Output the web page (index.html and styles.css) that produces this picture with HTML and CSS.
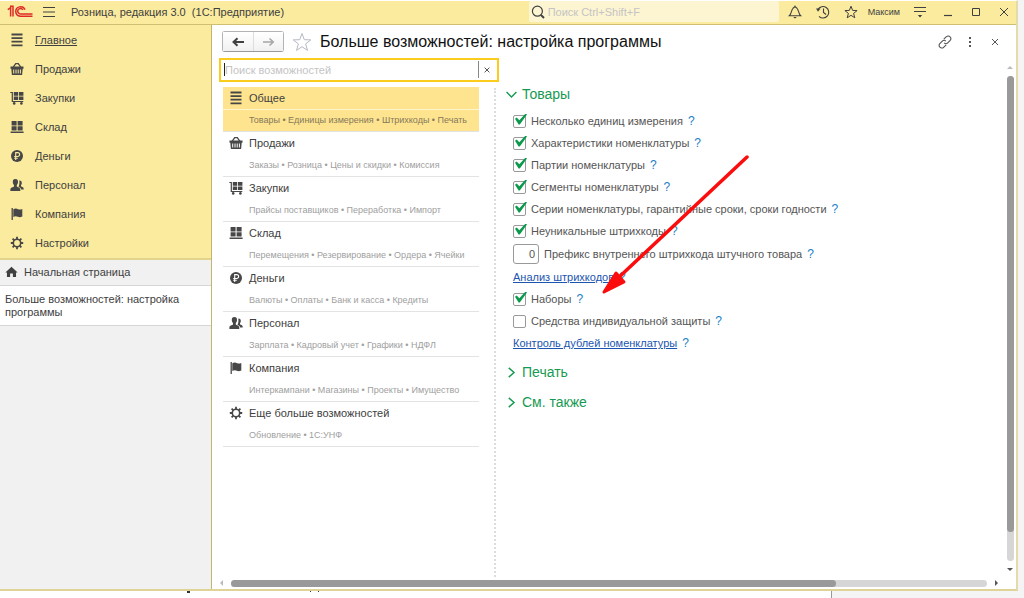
FILE: index.html
```html
<!DOCTYPE html>
<html lang="ru">
<head>
<meta charset="utf-8">
<title>Розница, редакция 3.0</title>
<link rel="stylesheet" href="styles.css">
</head>
<body>
<svg class="defs" aria-hidden="true">
  <symbol id="i-list" viewBox="0 0 14 14"><path d="M1.500 1.500h11M1.500 5.100h11M1.500 8.700h11M1.500 12.300h11" stroke="currentColor" stroke-width="1.800"/></symbol>
  <symbol id="i-basket" viewBox="0 0 14 14"><path d="M3.200 5.200 5.600 1.800M10.800 5.200 8.400 1.800M5.200 1.600h3.600" stroke="currentColor" stroke-width="1.300" fill="none"/><path fill="currentColor" fill-rule="evenodd" d="M.5 4.600h13v2.200h-.8l-.6 6.200H1.900l-.6-6.200H.5zM3.200 7.600v3.900h1V7.600zm2.300 0v3.900h1V7.600zm2.200 0v3.900h1V7.600zm2.200 0v3.900h1V7.600z"/></symbol>
  <symbol id="i-cart" viewBox="0 0 14 14"><path d="M.3 1.500h2v9h11" stroke="currentColor" stroke-width="1.200" fill="none"/><path fill="currentColor" d="M3.800 1h4.400v3.700H3.800zM9 1h4.400v3.700H9zM3.800 5.400h4.400v3.600H3.800zM9 5.400h4.400v3.600H9z"/><circle cx="4.200" cy="12.400" r="1.300" fill="currentColor"/><circle cx="11.400" cy="12.400" r="1.300" fill="currentColor"/></symbol>
  <symbol id="i-stock" viewBox="0 0 14 14"><path fill="currentColor" d="M1.600 1h5v4.400h-5zM7.600 1h5v4.400h-5zM1.600 6.300h5v4.300h-5zM7.600 6.300h5v4.300h-5zM.6 11.400h13V13H.6z"/></symbol>
  <symbol id="i-money" viewBox="0 0 14 14"><circle cx="7" cy="7" r="6" fill="currentColor"/><path class="knockout" d="M5.700 11V3.600h2a1.900 1.900 0 0 1 0 3.900H4.200M4.200 9.200h3.600" fill="none" stroke-width="1.100"/></symbol>
  <symbol id="i-staff" viewBox="0 0 14 14"><path fill="currentColor" d="M5.400 1C7.400 1 8.100 2.300 8 4c0 1.400-.6 2.400-1.200 3v1.600c.8.700 3.500 1.100 3.500 2.800V13H.4v-1.600c0-1.700 2.800-2.100 3.600-2.800V7C3.300 6.400 2.800 5.400 2.800 4c-.1-1.700.7-3 2.600-3zM9.300 2.600c1.700-.2 2.600.9 2.500 2.500 0 1-.4 1.800-.8 2.200v1c.6.600 2.700.900 2.700 2.300v1h-2.500c-.2-1.600-1.800-2.400-2.700-2.800.9-1.500 1.200-4 .8-6.200z"/></symbol>
  <symbol id="i-flag" viewBox="0 0 14 14"><path d="M2.200 1v12" stroke="currentColor" stroke-width="1.300"/><path fill="currentColor" d="M3.300 2.200c2-1 3.500-.7 4.800 0 1.400.6 2.600.4 4.200-.3v7.500c-1.600.8-3 1-4.400.4-1.400-.6-2.700-.9-4.600.1z"/></symbol>
  <symbol id="i-gear" viewBox="0 0 14 14"><circle cx="7" cy="7" r="3.700" fill="none" stroke="currentColor" stroke-width="1.600"/><path d="M7 .8v2.400M7 10.800v2.400M.8 7h2.400M10.800 7h2.400M2.600 2.600l1.700 1.700M9.700 9.700l1.700 1.700M11.400 2.600 9.700 4.300M4.300 9.700l-1.700 1.700" stroke="currentColor" stroke-width="1.800"/></symbol>
  <symbol id="i-star" viewBox="0 0 20 20"><path d="m10 1.500 2.300 6.200 6.500.2-5.200 4 1.900 6.500L10 14.700l-5.500 3.700 1.900-6.500-5.200-4 6.500-.2z" fill="none" stroke="currentColor"/></symbol>
  <symbol id="i-down" viewBox="0 0 10 10"><path d="m.5 2.800 4.500 4.400 4.500-4.400" fill="none" stroke="currentColor" stroke-width="1.300"/></symbol>
  <symbol id="i-right" viewBox="0 0 10 10"><path d="m2.500.8 4.800 4.200-4.800 4.200" fill="none" stroke="currentColor" stroke-width="1.300"/></symbol>
  <symbol id="i-close" viewBox="0 0 10 10"><path d="m1 1 8 8M9 1 1 9" stroke="currentColor" stroke-width="1.500" fill="none"/></symbol>
</svg>

<div class="window">
  <header class="titlebar">
    <svg class="logo" viewBox="0 0 26 14"><path d="M.8 4.600 3.600 2.600v8.900M3 1.300h3v10.200M18 4.600A4.800 4.800 0 1 0 13.200 11.300H25.500M15.900 5A2.700 2.700 0 1 0 13.300 8.900H25.500" fill="none" stroke="#df2b28" stroke-width="1.500"/></svg>
    <button class="plain burger" aria-label="Меню"><svg viewBox="0 0 14 12"><path d="M1 1.500h12M1 6h12M1 10.500h12" stroke="currentColor"/></svg></button>
    <h1 class="app-name">Розница, редакция 3.0&nbsp; (1С:Предприятие)</h1>
    <label class="global-search">
      <svg viewBox="0 0 14 14"><circle cx="6.400" cy="6.200" r="5" fill="none" stroke="currentColor" stroke-width="1.200"/><path d="m10 10 3 3" stroke="currentColor" stroke-width="2"/></svg>
      <input type="text" placeholder="Поиск Ctrl+Shift+F" aria-label="Поиск">
    </label>
    <nav class="tools">
      <button class="plain" aria-label="Уведомления"><svg viewBox="0 0 14 14"><path d="M1.300 10.800C3.500 9 3.300 4.800 5 3.300 5.600 2.700 6.400 2.500 7 1.300c.6 1.200 1.400 1.400 2 2 1.700 1.500 1.500 5.700 3.700 7.500z" fill="none" stroke="currentColor" stroke-width="1.100"/><path d="M5.200 12h3.600L7 13.600z" fill="currentColor"/></svg></button>
      <button class="plain" aria-label="История"><svg viewBox="0 0 14 14"><path d="M2 4.600A5.700 5.700 0 1 1 3 11.300M7.500 3.500v4l2.600 2" fill="none" stroke="currentColor" stroke-width="1.100"/><path d="M0 3.500h4.500L2 6.800z" fill="currentColor"/></svg></button>
      <button class="plain" aria-label="Избранное"><svg viewBox="0 0 14 14"><path d="m7 1.200 1.600 4.200 4.500.2-3.500 2.800 1.200 4.400L7 10.300l-3.800 2.500 1.200-4.400L.9 5.600l4.500-.2z" fill="none" stroke="currentColor"/></svg></button>
      <button class="plain user">Максим</button>
      <button class="plain" aria-label="Настройка панели"><svg viewBox="0 0 14 14"><path d="M1 2.500h12M1 6.500h12" stroke="currentColor" stroke-width="1.100"/><path d="M4.800 10h4.400L7 12.500z" fill="currentColor"/></svg></button>
      <button class="plain" aria-label="Свернуть"><svg viewBox="0 0 14 14"><path d="M3 10.500h8" stroke="currentColor" stroke-width="1.200"/></svg></button>
      <button class="plain" aria-label="Развернуть"><svg viewBox="0 0 14 14"><path d="M3.500 3.500h7v7h-7z" fill="none" stroke="currentColor"/></svg></button>
      <button class="plain" aria-label="Закрыть"><svg viewBox="0 0 14 14"><path d="m3 3 8 8M11 3l-8 8" stroke="currentColor"/></svg></button>
    </nav>
  </header>

  <div class="body">
    <aside class="sidebar">
      <nav class="sections">
        <a class="current" href="#"><svg><use href="#i-list"/></svg><span>Главное</span></a>
        <a href="#"><svg><use href="#i-basket"/></svg><span>Продажи</span></a>
        <a href="#"><svg><use href="#i-cart"/></svg><span>Закупки</span></a>
        <a href="#"><svg><use href="#i-stock"/></svg><span>Склад</span></a>
        <a href="#"><svg><use href="#i-money"/></svg><span>Деньги</span></a>
        <a href="#"><svg><use href="#i-staff"/></svg><span>Персонал</span></a>
        <a href="#"><svg><use href="#i-flag"/></svg><span>Компания</span></a>
        <a href="#"><svg><use href="#i-gear"/></svg><span>Настройки</span></a>
      </nav>
      <a class="home" href="#"><svg viewBox="0 0 14 12"><path d="M7 .4 13.600 6.600H11.900V11.500H8.500V7.700h-3v3.800H2.100V6.600H.4z" fill="currentColor"/></svg>Начальная страница</a>
      <a class="open-tab" href="#">Больше возможностей: настройка программы</a>
    </aside>

    <main class="page">
      <div class="page-head">
        <div class="history">
          <button aria-label="Назад"><svg viewBox="0 0 12 10"><path d="M12 5H3M5.500 1.200 1.500 5l4 3.800" fill="none" stroke="currentColor" stroke-width="2"/></svg></button>
          <button class="off" aria-label="Вперед"><svg viewBox="0 0 12 10"><path d="M0 5h9M6.500 1.500 10.300 5 6.500 8.500" fill="none" stroke="currentColor" stroke-width="1.500"/></svg></button>
        </div>
        <button class="plain fav" aria-label="В избранное"><svg viewBox="0 0 20 20"><use href="#i-star"/></svg></button>
        <h2>Больше возможностей: настройка программы</h2>
        <div class="page-tools">
          <button class="plain" aria-label="Ссылка"><svg viewBox="0 0 14 14"><path d="m5.800 4.200 2.600-2.500a2.500 2.500 0 0 1 3.700.1 2.500 2.500 0 0 1 .1 3.600L9.700 7.900a2.500 2.500 0 0 1-3.500 0M8.200 9.800l-2.600 2.500a2.500 2.500 0 0 1-3.700-.1 2.500 2.500 0 0 1-.1-3.600l2.500-2.500a2.500 2.500 0 0 1 3.500 0" fill="none" stroke="currentColor" stroke-width="1.100"/></svg></button>
          <button class="plain" aria-label="Еще"><svg viewBox="0 0 14 14"><path d="M6 2h2v2H6zM6 6h2v2H6zM6 10h2v2H6z" fill="currentColor"/></svg></button>
          <button class="plain" aria-label="Закрыть"><svg viewBox="0 0 14 14"><path d="m4 4 6 6M10 4l-6 6" stroke="currentColor"/></svg></button>
        </div>
      </div>

      <div class="content">
        <div class="left">
          <div class="filter">
            <span class="caret"></span>
            <input type="text" placeholder="Поиск возможностей" aria-label="Поиск возможностей">
            <button aria-label="Очистить"><svg viewBox="0 0 10 10"><use href="#i-close"/></svg></button>
          </div>
          <ul class="groups">
            <li class="selected"><h3><svg><use href="#i-list"/></svg>Общее</h3><p>Товары • Единицы измерения • Штрихкоды • Печать</p></li>
            <li><h3><svg><use href="#i-basket"/></svg>Продажи</h3><p>Заказы • Розница • Цены и скидки • Комиссия</p></li>
            <li><h3><svg><use href="#i-cart"/></svg>Закупки</h3><p>Прайсы поставщиков • Переработка • Импорт</p></li>
            <li><h3><svg><use href="#i-stock"/></svg>Склад</h3><p>Перемещения • Резервирование • Ордера • Ячейки</p></li>
            <li><h3><svg><use href="#i-money"/></svg>Деньги</h3><p>Валюты • Оплаты • Банк и касса • Кредиты</p></li>
            <li><h3><svg><use href="#i-staff"/></svg>Персонал</h3><p>Зарплата • Кадровый учет • Графики • НДФЛ</p></li>
            <li><h3><svg><use href="#i-flag"/></svg>Компания</h3><p>Интеркампани • Магазины • Проекты • Имущество</p></li>
            <li><h3><svg><use href="#i-gear"/></svg>Еще больше возможностей</h3><p>Обновление • 1С:УНФ</p></li>
          </ul>
        </div>
        <div class="splitter"></div>
        <section class="options">
          <button class="fold"><svg><use href="#i-down"/></svg>Товары</button>
          <div class="fields">
            <div class="row"><label><input type="checkbox" checked>Несколько единиц измерения</label><button class="help">?</button></div>
            <div class="row"><label><input type="checkbox" checked>Характеристики номенклатуры</label><button class="help">?</button></div>
            <div class="row"><label><input type="checkbox" checked>Партии номенклатуры</label><button class="help">?</button></div>
            <div class="row"><label><input type="checkbox" checked>Сегменты номенклатуры</label><button class="help">?</button></div>
            <div class="row"><label><input type="checkbox" checked>Серии номенклатуры, гарантийные сроки, сроки годности</label><button class="help">?</button></div>
            <div class="row"><label><input type="checkbox" checked>Неуникальные штрихкоды</label><button class="help">?</button></div>
            <div class="row tall"><label><input class="prefix" type="text" value="0">Префикс внутреннего штрихкода штучного товара</label><button class="help">?</button></div>
            <div class="row"><a href="#">Анализ штрихкодов</a><button class="help">?</button></div>
            <div class="row"><label><input type="checkbox" checked>Наборы</label><button class="help">?</button></div>
            <div class="row"><label><input type="checkbox">Средства индивидуальной защиты</label><button class="help">?</button></div>
            <div class="row"><a href="#">Контроль дублей номенклатуры</a><button class="help">?</button></div>
          </div>
          <button class="fold"><svg><use href="#i-right"/></svg>Печать</button>
          <button class="fold"><svg><use href="#i-right"/></svg>См. также</button>
        </section>
        <div class="vscroll"><i class="up"></i><div class="track"><div class="thumb"></div></div><i class="down"></i></div>
      </div>
      <div class="hscroll"><i class="prev"></i><div class="track"><div class="thumb"></div></div><i class="next"></i></div>
    </main>
  </div>
</div>
<div class="behind"><div class="sheet"><svg viewBox="0 0 400 8"><path d="M187 0h3v2h-3zM310 0h1v1h-1zM318 0h1v1h-1z" fill="#333"/></svg></div></div>
<svg class="pointer" viewBox="0 0 160 150" aria-hidden="true"><path d="M149 10 18 133" stroke="#fb0d0d" stroke-width="3.500" stroke-linecap="round"/><path d="m6 145 12-19 8 9z" fill="#fb0d0d" stroke="#fb0d0d" stroke-width="3" stroke-linejoin="round"/></svg>
</body>
</html>
```
FILE: styles.css
```css
* { box-sizing: border-box; }
body {
  margin: 0;
  height: 100vh;
  display: flex;
  flex-direction: column;
  position: relative;
  background: #f4f4f4;
  color: #404040;
  font: 11px/14px "Liberation Sans", Arial, sans-serif;
  overflow: hidden;
}
h1, h2, h3, p, ul { margin: 0; padding: 0; font-weight: normal; font-size: inherit; }
ul { list-style: none; }
svg { display: block; flex: none; }
button, input { font: inherit; color: inherit; }
button { padding: 0; cursor: pointer; }
input { outline: 0; }
input::placeholder { color: #c4c4c4; opacity: 1; }
.defs { position: absolute; width: 0; height: 0; }
.plain { border: 0; background: none; }

.window {
  flex: 1;
  min-height: 0;
  display: flex;
  flex-direction: column;
  margin-right: 6px;
  border-top: 1px solid #fff;
  border-right: 2px solid #e4dbab;
  border-bottom: 2px solid #dfd398;
  background: #fff;
}
.titlebar {
  display: flex;
  align-items: center;
  height: 24px;
  flex: none;
  padding: 0 5px 2px 7px;
  background: #faeb9e;
  border-bottom: 1px solid #cfc071;
}
.logo { width: 26px; height: 14px; }
.burger { margin-left: 9px; }
.burger svg { width: 14px; height: 12px; }
.app-name { margin-left: 15px; flex: 1; }
.global-search {
  display: flex;
  align-items: center;
  align-self: stretch;
  width: 250px;
  padding-left: 2px;
  gap: 3px;
  background: #fdf5d2;
  border-radius: 2px;
}
.global-search svg { width: 14px; height: 14px; }
.global-search input { flex: 1; min-width: 0; border: 0; padding: 0; background: none; }
.tools { display: flex; align-items: center; gap: 14px; margin-left: 9px; }
.tools svg { width: 14px; height: 14px; }
.user { font-size: 9px; margin: 0 -1px 0 -4px; }

.body { flex: 1; min-height: 0; display: flex; }
.sidebar {
  width: 212px;
  flex: none;
  background: #f1f1f1;
  border-right: 1px solid #c3b56c;
}
.sidebar a { color: inherit; text-decoration: none; }
.sections { --paper: #faeb9e; background: #faeb9e; border-bottom: 2px solid #e2d48c; padding-bottom: 1px; }
.sections a { display: flex; align-items: center; height: 29px; padding-left: 10px; gap: 11px; }
.sections svg, .groups svg { width: 14px; height: 14px; color: #474747; }
.knockout { stroke: var(--paper); }
.current span { text-decoration: underline; }
.home {
  display: flex;
  align-items: center;
  height: 26px;
  padding: 0 0 2px 5px;
  gap: 6px;
  border-bottom: 1px solid #d6d6d6;
}
.home svg { width: 13px; height: 12px; }
.open-tab {
  display: block;
  padding: 7px 5px 6px;
  line-height: 13px;
  background: #fff;
  border-bottom: 1px solid #d6d6d6;
}

.page { flex: 1; min-width: 0; display: flex; flex-direction: column; }
.page-head { display: flex; align-items: center; height: 33px; flex: none; padding: 0 14px 0 10px; }
.history { display: flex; border: 1px solid #b3b3b3; border-bottom-color: #999; border-radius: 3px; }
.history button {
  display: grid;
  place-items: center;
  width: 30px;
  height: 19px;
  border: 0;
  background: linear-gradient(#fff, #f1f1f1);
}
.history .off { border-left: 1px solid #ddd; color: #a5a5a5; }
.history svg { width: 12px; height: 10px; }
.fav { margin: 0 8px; color: #b4b9c2; }
.fav svg { width: 20px; height: 20px; }
.page-head h2 { flex: 1; font-size: 16px; line-height: 20px; color: #111; }
.page-tools { display: flex; gap: 11px; color: #555; }
.page-tools svg { width: 14px; height: 14px; }

.content { flex: 1; min-height: 0; display: flex; }
.left { width: 280px; flex: none; margin-left: 7px; }
.filter { display: flex; align-items: center; height: 24px; border: 2px solid #fbcb1d; padding: 1px 3px 2px; }
.caret { width: 1px; height: 13px; background: #222; }
.filter input { flex: 1; min-width: 0; border: 0; padding: 0; }
.filter button { display: grid; place-items: center; align-self: stretch; width: 16px; border: 0; border-left: 1px solid #888; background: none; }
.filter button svg { width: 6px; height: 6px; }
.groups { --paper: #fff; margin: 5px 20px 0 4px; }
.groups li { border-bottom: 1px solid #e3e3e3; }
.groups h3 { display: flex; align-items: center; height: 22px; padding-left: 6px; gap: 6px; }
.groups p { height: 22px; padding-left: 26px; font-size: 9px; line-height: 23px; color: #a0a0a0; white-space: nowrap; }
.groups .selected { background: #fee48f; }
.groups .selected p { color: #85795a; border-top: 1px solid #fff4cc; line-height: 21px; }
.splitter { width: 0; margin: 30px 0 0 -5px; border-left: 2px dotted #dcdcdc; }
.options { flex: 1; min-width: 0; padding: 26px 0 0 10px; }
.fold {
  display: flex;
  align-items: center;
  gap: 5px;
  height: 30px;
  border: 0;
  background: none;
  color: #169a52;
  font-size: 14px;
}
.fold:first-child { height: 20px; }
.fold svg { width: 11px; height: 11px; }
.fields { padding: 6px 0 3px 7px; color: #555; }
.row { display: flex; align-items: center; height: 22px; gap: 5px; white-space: nowrap; }
.tall { height: 24px; }
.row label { display: flex; align-items: center; gap: 5px; }
.row a { color: #1b55b0; }
.help { border: 0; background: none; color: #1c80c6; font-size: 12px; }
input[type="checkbox"] {
  appearance: none;
  width: 13px;
  height: 13px;
  margin: 0;
  border: 1px solid #999;
  border-radius: 2px;
  background: #fff;
  position: relative;
}
input[type="checkbox"]:checked::after {
  content: "";
  position: absolute;
  left: 1px;
  top: -2px;
  width: 12px;
  height: 11px;
  background: #0b9a4b;
  clip-path: polygon(0 48%, 14% 36%, 36% 62%, 88% 0, 100% 8%, 40% 100%, 30% 100%);
}
.prefix { width: 26px; height: 20px; padding: 0 3px; border: 1px solid #999; border-radius: 3px; text-align: right; }

.vscroll { width: 12px; flex: none; display: flex; flex-direction: column; align-items: center; gap: 7px; padding: 8px 2px 6px 2px; }
.track { flex: 1; background: #d6d6d6; border-radius: 4px; }
.thumb { background: #999; border-radius: 4px; }
.vscroll .track { width: 7px; }
.vscroll .thumb { height: 94%; }
.hscroll { height: 12px; flex: none; display: flex; align-items: center; gap: 8px; padding: 0 18px 0 8px; }
.hscroll .track, .hscroll .thumb { height: 7px; }
.hscroll .thumb { width: 80%; }
.up, .down, .prev, .next { border: 3px solid transparent; width: 0; height: 0; }
.up { border-width: 0 3px 3px; border-bottom-color: #bbb; }
.down { border-width: 3px 3px 0; border-top-color: #555; }
.prev { border-width: 3px 3px 3px 0; border-right-color: #bbb; }
.next { border-width: 3px 0 3px 3px; border-left-color: #555; }

.behind { height: 7px; flex: none; display: flex; }
.sheet { width: 832px; background: #fff; border-right: 1px solid #999; }
.sheet svg { width: 400px; height: 8px; }
.pointer { position: absolute; left: 598px; top: 147px; width: 160px; height: 150px; pointer-events: none; }
```
